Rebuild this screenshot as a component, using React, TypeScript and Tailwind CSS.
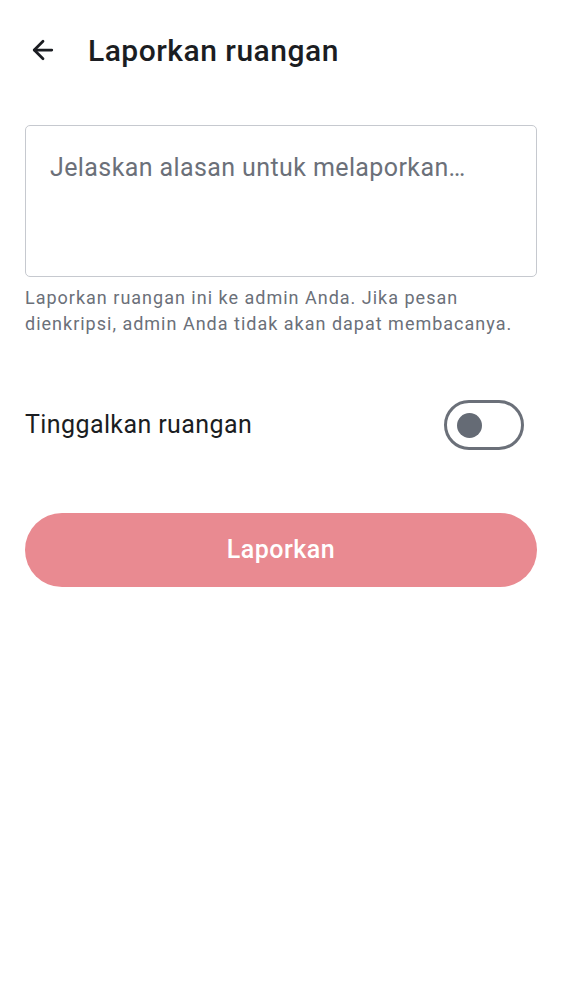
import { ArrowLeft } from "lucide-react";

export default function App() {
  return (
    <div
      className="min-h-screen w-full bg-white text-[#1b1d22]"
      style={{ fontFamily: "Roboto, 'Noto Sans', sans-serif" }}
    >
      {/* Top bar */}
      <header className="flex h-[100px] items-center pl-[28px]">
        <ArrowLeft size={30} strokeWidth={2.2} className="text-[#1b1d22]" />
        <h1 className="ml-[30px] text-[30px] font-medium tracking-[0.5px]">Laporkan ruangan</h1>
      </header>

      <div className="px-[25px] pt-[25px]">
        {/* Reason field */}
        <div className="h-[152px] rounded-[5px] border-[1.5px] border-[#c6c9cf] px-[24px] pt-[24px]">
          <p className="text-[25px] leading-[36px] tracking-[0.4px] text-[#6b7079]">
            Jelaskan alasan untuk melaporkan…
          </p>
        </div>
        <p className="mt-[8px] pr-[8px] text-[18px] leading-[26px] tracking-[1px] text-[#6b7079]">
          Laporkan ruangan ini ke admin Anda. Jika pesan dienkripsi, admin Anda tidak akan dapat membacanya.
        </p>

        {/* Leave room toggle */}
        <div className="mt-[63px] flex items-center justify-between pr-[13px]">
          <span className="text-[25px] tracking-[0.4px] text-[#1b1d22]">Tinggalkan ruangan</span>
          <div className="flex h-[50px] w-[80px] items-center rounded-full border-[3px] border-[#6b7079] bg-white pl-[10px]">
            <div className="h-[25px] w-[25px] rounded-full bg-[#656b75]" />
          </div>
        </div>

        {/* Submit */}
        <button className="mt-[63px] flex h-[74px] w-full items-center justify-center rounded-full bg-[#e98a91] text-[25px] font-medium tracking-[0.5px] text-white">
          Laporkan
        </button>
      </div>
    </div>
  );
}
